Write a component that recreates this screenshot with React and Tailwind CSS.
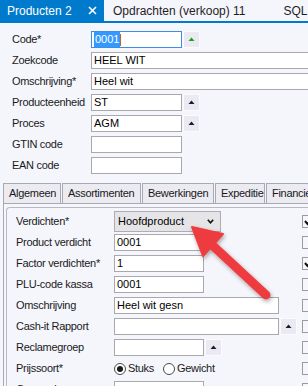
import React from "react";

const font = { fontFamily: '"Liberation Sans", Arial, sans-serif' };

function Tri({ color = "#1b1b3a" }) {
  return (
    <svg width="7" height="5" viewBox="0 0 7 5">
      <polygon points="3.5,0.5 6.5,4 0.5,4" fill={color} />
    </svg>
  );
}

function DropBtn({ color }) {
  return (
    <div className="w-[17px] h-[17px] ml-[1px] bg-[#eaeaf0] border border-[#fbfbff] flex items-center justify-center shrink-0">
      <Tri color={color} />
    </div>
  );
}

function Input({ w, children, focus }) {
  return (
    <div
      className={`h-[17px] bg-white border ${focus ? "border-[#3d8ee0]" : "border-[#a8a8ae]"} flex items-center pl-[2px] text-[11px] text-black shrink-0 overflow-hidden whitespace-nowrap`}
      style={{ width: w }}
    >
      {children}
    </div>
  );
}

function TopRow({ label, children }) {
  return (
    <div className="h-[21px] flex items-center">
      <div className="w-[79px] text-[11px] tracking-[-0.3px] text-[#1a1a1a] whitespace-nowrap shrink-0">{label}</div>
      {children}
    </div>
  );
}

function Check({ checked }) {
  return (
    <div className="w-[13px] h-[13px] border border-[#9a9aa0] bg-[#f7f7fb] shrink-0 flex items-center">
      {checked && (
        <svg width="11" height="11" viewBox="0 0 11 11">
          <polyline points="2,5 4.5,8 9,2" fill="none" stroke="#111" strokeWidth="2" />
        </svg>
      )}
    </div>
  );
}

function Row({ label, children, checked }) {
  return (
    <div className="h-[21px] flex items-center">
      <div className="w-[98px] text-[11px] tracking-[-0.3px] text-[#1a1a1a] whitespace-nowrap shrink-0">{label}</div>
      <div className="w-[188px] flex items-center shrink-0">{children}</div>
      <Check checked={checked} />
    </div>
  );
}

function Radio({ on, label }) {
  return (
    <div className="flex items-center gap-[2px]">
      <div className="w-[12px] h-[12px] rounded-full border border-[#4a4a4a] bg-white flex items-center justify-center">
        {on && <div className="w-[6px] h-[6px] rounded-full bg-[#1a1a1a]" />}
      </div>
      <span className="text-[11px] tracking-[-0.3px] text-[#1a1a1a]">{label}</span>
    </div>
  );
}

export default function App() {
  return (
    <div className="w-[308px] h-[386px] overflow-hidden bg-[#f5f5fc] relative flex flex-col" style={font}>
      {/* document tabs */}
      <div className="h-[21px] flex items-stretch shrink-0 text-[12px]">
        <div className="w-[104px] bg-[#007acc] text-white flex items-center pl-[7px] shrink-0">
          <span>Producten 2</span>
          <svg className="ml-auto mr-[7px]" width="9" height="9" viewBox="0 0 9 9">
            <path d="M1 1 L8 8 M8 1 L1 8" stroke="white" strokeWidth="1.6" />
          </svg>
        </div>
        <div className="flex items-center pl-[9px] text-[#1e1e1e] whitespace-nowrap">
          <span>Opdrachten (verkoop) 11</span>
          <span className="ml-[38px]">SQL</span>
        </div>
      </div>
      <div className="h-[2px] bg-[#007acc] shrink-0" />

      {/* top form */}
      <div className="pt-[6px] pl-[12px] flex flex-col shrink-0">
        <TopRow label="Code*">
          <Input w={91} focus>
            <span className="bg-[#3399ff] text-white px-[1px]">0001</span>
            <span className="w-[1px] h-[12px] bg-[#d06020]" />
          </Input>
          <DropBtn color="#1aa31a" />
        </TopRow>
        <TopRow label="Zoekcode">
          <Input w={230}>HEEL WIT</Input>
        </TopRow>
        <TopRow label="Omschrijving*">
          <Input w={230}>Heel wit</Input>
        </TopRow>
        <TopRow label="Producteenheid">
          <Input w={91}>ST</Input>
          <DropBtn />
        </TopRow>
        <TopRow label="Proces">
          <Input w={91}>AGM</Input>
          <DropBtn />
        </TopRow>
        <TopRow label="GTIN code">
          <Input w={91} />
        </TopRow>
        <TopRow label="EAN code">
          <Input w={91} />
        </TopRow>
      </div>

      {/* section tabs */}
      <div className="mt-[7px] h-[20px] pl-[3px] flex gap-[1px] shrink-0 text-[11px] tracking-[-0.3px] text-[#1a1a1a]">
        {[
          ["Algemeen", 58],
          ["Assortimenten", 79],
          ["Bewerkingen", 72],
          ["Expeditie", 50],
          ["Financieel", 60],
        ].map(([t, w]) => (
          <div
            key={t}
            className="h-[20px] bg-[#ebebf1] border border-b-0 border-[#a9a9b1] flex items-center pl-[5px] whitespace-nowrap overflow-hidden shrink-0"
            style={{ width: w }}
          >
            {t}
          </div>
        ))}
      </div>

      {/* panel */}
      <div className="ml-[3px] flex-1 border-l border-t border-[#a9a9b1] pt-[3px] pl-[2px] flex">
        <div className="flex-1 border-l border-t border-[#b9b9c1] rounded-tl-[4px] pt-[3px] pl-[9px] flex flex-col">
          <Row label="Verdichten*" checked>
            <div className="w-[107px] h-[21px] bg-[#e5e5e8] border border-[#adadb2] flex items-center pl-[3px] text-[11px] text-black">
              <span>Hoofdproduct</span>
              <svg className="ml-auto mr-[6px]" width="7" height="5" viewBox="0 0 7 5">
                <polyline points="0.8,0.8 3.5,3.8 6.2,0.8" fill="none" stroke="#111" strokeWidth="1.6" />
              </svg>
            </div>
          </Row>
          <Row label="Product verdicht">
            <Input w={90}>0001</Input>
          </Row>
          <Row label="Factor verdichten*" checked>
            <Input w={90}>1</Input>
          </Row>
          <Row label="PLU-code kassa">
            <Input w={90}>0001</Input>
          </Row>
          <Row label="Omschrijving">
            <Input w={165}>Heel wit gesn</Input>
          </Row>
          <Row label="Cash-it Rapport">
            <Input w={165} />
            <DropBtn />
          </Row>
          <Row label="Reclamegroep">
            <Input w={90} />
            <DropBtn />
          </Row>
          <Row label="Prijssoort*">
            <div className="flex items-center gap-[9px]">
              <Radio on label="Stuks" />
              <Radio label="Gewicht" />
            </div>
          </Row>
          <Row label="Groepering">
            <Input w={90} />
          </Row>
        </div>
      </div>

      {/* red arrow annotation */}
      <svg className="absolute left-0 top-0 pointer-events-none" width="308" height="386" viewBox="0 0 308 386">
        <defs>
          <filter id="sh" x="-20%" y="-20%" width="140%" height="140%">
            <feDropShadow dx="1" dy="2" stdDeviation="2" floodColor="#000" floodOpacity="0.35" />
          </filter>
        </defs>
        <g filter="url(#sh)" fill="#ee3b3f" stroke="#ee3b3f">
          <line x1="211" y1="244" x2="266" y2="295" strokeWidth="9" strokeLinecap="round" />
          <polygon points="192,227 223,234 203,256" strokeWidth="2" strokeLinejoin="round" />
        </g>
      </svg>
    </div>
  );
}
